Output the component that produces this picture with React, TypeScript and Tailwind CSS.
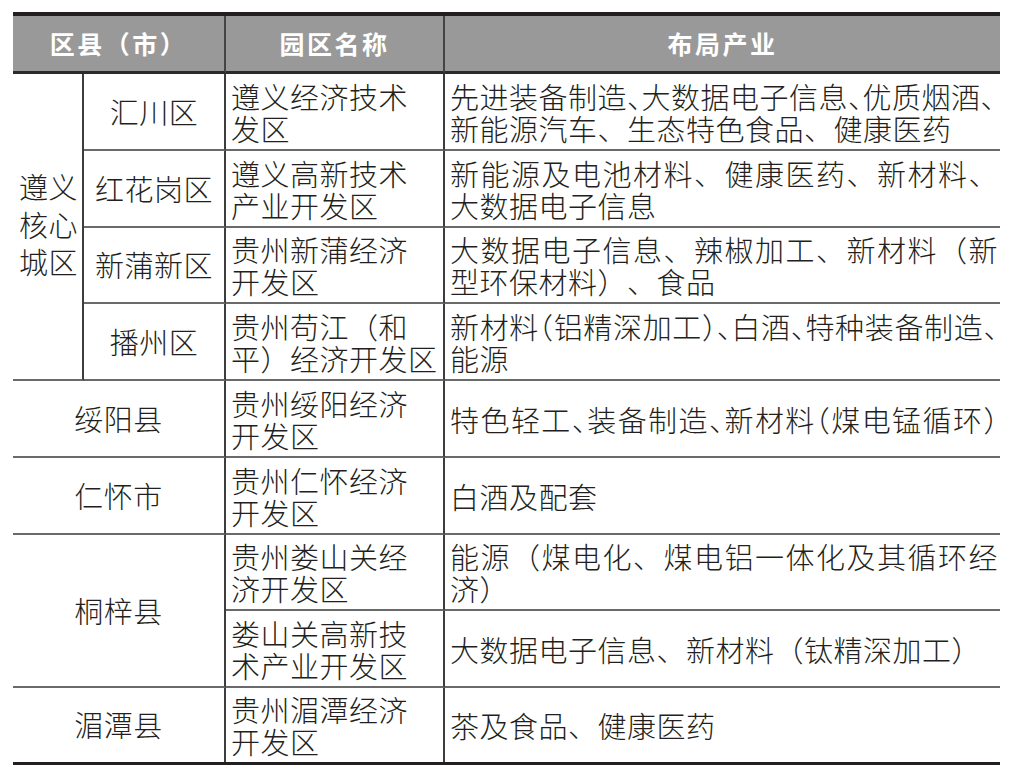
import React from 'react';

const font = { fontFamily: '"Noto Sans CJK SC", "Noto Sans", sans-serif' };

// half-width punctuation: trims the empty half of the em box
const Tr = ({ c }: { c: string }) => <span className="mr-[-15px]">{c}</span>;
const Tl = ({ c }: { c: string }) => <span className="ml-[-15px]">{c}</span>;

const Full: React.FC<{ children: React.ReactNode }> = ({ children }) => (
  <div className="whitespace-nowrap text-justify [text-align-last:justify]">{children}</div>
);
const Line: React.FC<{ children: React.ReactNode }> = ({ children }) => (
  <div className="whitespace-nowrap">{children}</div>
);

const District: React.FC<{ children: React.ReactNode }> = ({ children }) => (
  <div className="flex items-center justify-center border-r-2 border-r-[#3d3d3d] border-b-2 border-b-[#6a6a6a] whitespace-nowrap">
    {children}
  </div>
);

const Park: React.FC<{ lines: string[]; last?: boolean }> = ({ lines, last }) => (
  <div
    className={
      last
        ? 'flex flex-col justify-center pl-[5px] leading-[32px] border-r-2 border-r-[#3d3d3d]'
        : 'flex flex-col justify-center pl-[5px] leading-[32px] border-r-2 border-r-[#3d3d3d] border-b-2 border-b-[#6a6a6a]'
    }
  >
    {lines.map((l) => (
      <Line key={l}>{l}</Line>
    ))}
  </div>
);

const Industry: React.FC<{ children: React.ReactNode; last?: boolean }> = ({ children, last }) => (
  <div
    className={
      last
        ? 'flex flex-col justify-center pl-[5px] pr-[2px] leading-[32px]'
        : 'flex flex-col justify-center pl-[5px] pr-[2px] leading-[32px] border-b-2 border-b-[#6a6a6a]'
    }
  >
    {children}
  </div>
);

export default function App() {
  return (
    <div className="min-h-screen w-[1012px] h-[778px] bg-white overflow-hidden [text-spacing-trim:space-all]" style={font}>
      <div className="mt-[12px] ml-[13px] w-[987px] border-t-4 border-t-[#231f20] border-b-[3px] border-b-[#231f20]">
        <div className="grid grid-cols-[71px_142px_219px_555px] grid-rows-[58px_77px_77px_76px_77px_77px_77px_76px_77px_74px] text-[29px] tracking-[0.5px] font-light text-[#231f20]">
          {/* header */}
          <div className="col-span-2 flex items-center justify-center bg-[#999999] border-b-[3px] border-b-[#2b2b2b] border-r-2 border-r-[#444444] text-white text-[25px] font-bold tracking-[2.5px]">
            区县（市）
          </div>
          <div className="flex items-center justify-center bg-[#999999] border-b-[3px] border-b-[#2b2b2b] border-r-2 border-r-[#444444] text-white text-[25px] font-bold tracking-[2.5px]">
            园区名称
          </div>
          <div className="flex items-center justify-center bg-[#999999] border-b-[3px] border-b-[#2b2b2b] text-white text-[25px] font-bold tracking-[2.5px]">
            布局产业
          </div>

          {/* 遵义核心城区 */}
          <div className="row-span-4 flex flex-col justify-center pl-[6px] pb-[4px] leading-[37.5px] border-r-2 border-r-[#3d3d3d] border-b-2 border-b-[#6a6a6a]">
            <div>遵义</div>
            <div>核心</div>
            <div>城区</div>
          </div>

          <District>汇川区</District>
          <Park lines={['遵义经济技术', '发区']} />
          <Industry>
            <Full>
              先进装备制造<Tr c="、" />大数据电子信息<Tr c="、" />优质烟酒、
            </Full>
            <Line>新能源汽车、生态特色食品、健康医药</Line>
          </Industry>

          <District>红花岗区</District>
          <Park lines={['遵义高新技术', '产业开发区']} />
          <Industry>
            <Full>新能源及电池材料、健康医药、新材料、</Full>
            <Line>大数据电子信息</Line>
          </Industry>

          <District>新蒲新区</District>
          <Park lines={['贵州新蒲经济', '开发区']} />
          <Industry>
            <Full>大数据电子信息、辣椒加工、新材料（新</Full>
            <Line>型环保材料）、食品</Line>
          </Industry>

          <District>播州区</District>
          <Park lines={['贵州苟江（和', '平）经济开发区']} />
          <Industry>
            <Full>
              新材料<Tl c="（" />铝精深加工<Tr c="）" />
              <Tr c="、" />白酒<Tr c="、" />特种装备制造<Tr c="、" />
            </Full>
            <Line>能源</Line>
          </Industry>

          {/* counties */}
          <div className="col-span-2 flex items-center justify-center border-r-2 border-r-[#3d3d3d] border-b-2 border-b-[#6a6a6a]">
            绥阳县
          </div>
          <Park lines={['贵州绥阳经济', '开发区']} />
          <Industry>
            <Full>
              特色轻工<Tr c="、" />装备制造<Tr c="、" />新材料<Tl c="（" />煤电锰循环<Tr c="）" />
            </Full>
          </Industry>

          <div className="col-span-2 flex items-center justify-center border-r-2 border-r-[#3d3d3d] border-b-2 border-b-[#6a6a6a]">
            仁怀市
          </div>
          <Park lines={['贵州仁怀经济', '开发区']} />
          <Industry>
            <Line>白酒及配套</Line>
          </Industry>

          <div className="col-span-2 row-span-2 flex items-center justify-center border-r-2 border-r-[#3d3d3d] border-b-2 border-b-[#6a6a6a]">
            桐梓县
          </div>
          <Park lines={['贵州娄山关经', '济开发区']} />
          <Industry>
            <Full>能源（煤电化、煤电铝一体化及其循环经</Full>
            <Line>济）</Line>
          </Industry>
          <Park lines={['娄山关高新技', '术产业开发区']} />
          <Industry>
            <Line>大数据电子信息、新材料（钛精深加工）</Line>
          </Industry>

          <div className="col-span-2 flex items-center justify-center border-r-2 border-r-[#3d3d3d]">
            湄潭县
          </div>
          <Park lines={['贵州湄潭经济', '开发区']} last />
          <Industry last>
            <Line>茶及食品、健康医药</Line>
          </Industry>
        </div>
      </div>
    </div>
  );
}
